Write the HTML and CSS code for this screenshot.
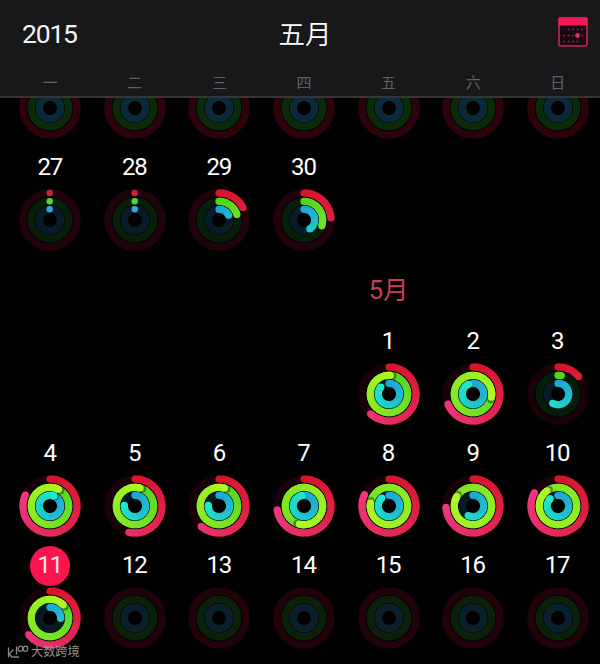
FILE: index.html
```
<!DOCTYPE html>
<html lang="zh-CN">
<head>
<meta charset="utf-8">
<title>五月 2015</title>
<link rel="stylesheet" href="styles.css">
</head>
<body>
<div class="app">
  <header class="header">
    <div class="bar">
      <span class="year">2015</span>
      <h1 class="title">五月</h1>
      <svg class="today" viewBox="0 0 30 30" width="30" height="30">
        <rect x="1" y="1" width="28" height="28" rx="2" fill="#1c0a10" stroke="#c02a50" stroke-width="1.6"/>
        <path d="M.5 8.5V2Q.5.3 2.2.3H27.800Q29.500.3 29.500 2V8.500Z" fill="#f51a55"/>
        <g stroke="#a82c4c" stroke-width="1.700" stroke-linecap="round" stroke-dasharray="0 4.500">
          <path d="M10.500 12.500H25"/>
          <path d="M6 18.500H25"/>
          <path d="M6 24.500H20"/>
        </g>
        <circle cx="19.500" cy="18.500" r="2.400" fill="#e0305f"/>
      </svg>
    </div>
    <div class="weekdays"><span>一</span><span>二</span><span>三</span><span>四</span><span>五</span><span>六</span><span>日</span></div>
  </header>
  <main class="calendar" id="calendar"></main>
  <div class="watermark">
    <svg viewBox="0 0 22 14" width="22" height="14" fill="none" stroke="#8b8785" stroke-width="1.300" stroke-linecap="round">
      <path d="M1.500 3V12M6 5L2.500 8.500Q3.500 12.500 7 12M9.500 2V9M8 12H11.500"/>
      <ellipse cx="13.500" cy="3.800" rx="2.300" ry="2.600"/>
      <ellipse cx="18.500" cy="3.800" rx="2.300" ry="2.600"/>
    </svg>
    <span>大数跨境</span>
  </div>
</div>
<script src="rings.js"></script>
</body>
</html>
```
FILE: styles.css
```
* { box-sizing: border-box; }

body {
  margin: 0;
  background: #000;
  color: #fff;
  font-family: Roboto, "Noto Sans CJK SC", sans-serif;
}

.app {
  position: relative;
  display: flex;
  flex-direction: column;
  height: 664px;
  overflow: hidden;
  background: #010102;
}

.header {
  flex: none;
  height: 98px;
  background: #18181a;
  border-bottom: 2px solid #363637;
}

.bar {
  display: grid;
  grid-template-columns: 1fr auto 1fr;
  align-items: center;
  height: 68px;
  padding: 0 12px 0 22px;
}

.year {
  margin-top: -2px;
  font-size: 26.5px;
  letter-spacing: -1.2px;
  color: #f4f4f4;
}

.title {
  margin: 0;
  padding-top: 1px;
  font-size: 26.5px;
  font-weight: 350;
  line-height: 40px;
}

.today { justify-self: end; margin-top: -4px; }

.weekdays {
  display: grid;
  grid-template-columns: repeat(7, 1fr);
  height: 28px;
  padding-left: 8px;
  text-align: center;
  font-size: 15px;
  line-height: 31px;
  color: #606062;
}

.calendar {
  flex: 1;
  min-height: 0;
  overflow: hidden;
}

.week {
  display: grid;
  grid-template-columns: repeat(7, 1fr);
  height: 112px;
  padding: 3px 0 0 8px;
}

.week.partial {
  height: 74px;
  margin-top: -22px;
  padding-top: 0;
}

.day {
  display: flex;
  flex-direction: column;
  align-items: center;
  gap: 5px;
}

.date {
  height: 30px;
  font-size: 24px;
  line-height: 29px;
  letter-spacing: -1.2px;
  text-indent: -1.2px;
}

.date.today-date {
  width: 40px;
  height: 40px;
  margin: -5px 0;
  border-radius: 50%;
  background: #f9164f;
  color: #ffe3ea;
  text-align: center;
  line-height: 39px;
}

.month {
  display: grid;
  grid-template-columns: repeat(7, 1fr);
  height: 62px;
  padding-left: 8px;
}

.month span {
  grid-column: 5;
  text-align: center;
  font-size: 25.5px;
  line-height: 57px;
  color: #c83e5b;
}

.rings { display: block; flex: none; }

.watermark {
  position: absolute;
  left: 7px;
  bottom: 4px;
  display: flex;
  align-items: center;
  gap: 2px;
  font-size: 12.2px;
  line-height: 16px;
  color: #999492;
}
```
FILE: rings.js
```
const SVG = "http://www.w3.org/2000/svg";
const RADII = [27, 18.7, 10.7];
const COLORS = [
  [[214, 20, 42], [238, 56, 124]],
  [[80, 212, 36], [172, 248, 34]],
  [[32, 168, 212], [32, 232, 204]]
];
const TRACKS = {
  active: ["#180207", "#051c0a", "#061a24"],
  idle: ["#20030a", "#071f09", "#081b28"],
  dim: ["#2c020b", "#0b2a08", "#0b293a"],
  future: ["#210208", "#0a2008", "#091f2c"]
};

function add(svg, name, attrs) {
  const el = document.createElementNS(SVG, name);
  for (const k in attrs) el.setAttribute(k, attrs[k]);
  svg.appendChild(el);
}

function point(r, deg) {
  const a = deg * Math.PI / 180;
  return [32 + r * Math.sin(a), 32 - r * Math.cos(a)];
}

function mix(pair, t) {
  return "rgb(" + pair[0].map((v, i) => Math.round(v + (pair[1][i] - v) * t)).join(",") + ")";
}

function stroke(svg, r, from, to, color) {
  const p = point(r, from), q = point(r, to);
  add(svg, "path", {
    d: `M${p[0]} ${p[1]}A${r} ${r} 0 ${to - from > 180 ? 1 : 0} 1 ${q[0]} ${q[1]}`,
    fill: "none", stroke: color, "stroke-width": 7.2
  });
}

// Draws one progress arc; end is the sweep in degrees and may exceed a full turn.
function arc(svg, i, end) {
  const r = RADII[i], span = Math.max(end, 260), step = 6;
  const first = Math.max(0, end - 356);
  const start = point(r, 0);
  if (first === 0) {
    add(svg, "circle", { cx: start[0], cy: start[1], r: 3.6, fill: mix(COLORS[i], 0) });
  }
  for (let a = first; a < end; a += step) {
    stroke(svg, r, a, Math.min(a + step + 3, end), mix(COLORS[i], a / span));
  }
  if (end > 352) {
    const s = point(r, end + 8);
    add(svg, "circle", { cx: s[0], cy: s[1], r: 3.6, fill: "#031008", "fill-opacity": 0.4 });
    stroke(svg, r, end - 16, end, mix(COLORS[i], (end - 8) / span));
  }
  const tip = point(r, end);
  add(svg, "circle", { cx: tip[0], cy: tip[1], r: 3.6, fill: mix(COLORS[i], end / span) });
}

function rings(values, kind) {
  const svg = document.createElementNS(SVG, "svg");
  svg.setAttribute("class", "rings");
  svg.setAttribute("viewBox", "0 0 64 64");
  svg.setAttribute("width", 64);
  svg.setAttribute("height", 64);
  RADII.forEach((r, i) => {
    add(svg, "circle", { cx: 32, cy: 32, r, fill: "none", stroke: TRACKS[kind][i], "stroke-width": 7.5 });
  });
  if (kind === "idle" && !values) {
    ["#cc2338", "#5cd03c", "#3aa4d4"].forEach((fill, i) => {
      add(svg, "circle", { cx: 31.7, cy: 32 - RADII[i], r: 3.2, fill });
    });
  }
  if (values) values.forEach((v, i) => arc(svg, i, v));
  return svg;
}

const calendar = document.getElementById("calendar");

function week(days, partial) {
  const row = document.createElement("section");
  row.className = partial ? "week partial" : "week";
  days.forEach(d => {
    const cell = document.createElement("div");
    cell.className = "day";
    if (d) {
      if (d.n) {
        const label = document.createElement("span");
        label.className = d.n === 11 ? "date today-date" : "date";
        label.textContent = d.n;
        cell.appendChild(label);
      }
      cell.appendChild(rings(d.v, d.k || "active"));
    }
    row.appendChild(cell);
  });
  calendar.appendChild(row);
}

week(Array.from({ length: 7 }, () => ({ k: "dim" })), true);
week([
  { n: 27, k: "idle" },
  { n: 28, k: "idle" },
  { n: 29, k: "idle", v: [63, 73, 64] },
  { n: 30, k: "idle", v: [85, 108, 147] },
  null, null, null
]);

const month = document.createElement("div");
month.className = "month";
month.innerHTML = "<span>5月</span>";
calendar.appendChild(month);

week([
  null, null, null, null,
  { n: 1, v: [223, 364, 310] },
  { n: 2, v: [248, 460, 335] },
  { n: 3, v: [50, 10, 210] }
]);
week([
  { n: 4, v: [294, 387, 382] },
  { n: 5, v: [193, 376, 273] },
  { n: 6, v: [221, 377, 273] },
  { n: 7, v: [262, 554, 348] },
  { n: 8, v: [295, 639, 318] },
  { n: 9, v: [267, 660, 207] },
  { n: 10, v: [299, 684, 313] }
]);
week([
  { n: 11, v: [232, 405, 92] },
  ...[12, 13, 14, 15, 16, 17].map(n => ({ n, k: "future" }))
]);
```
